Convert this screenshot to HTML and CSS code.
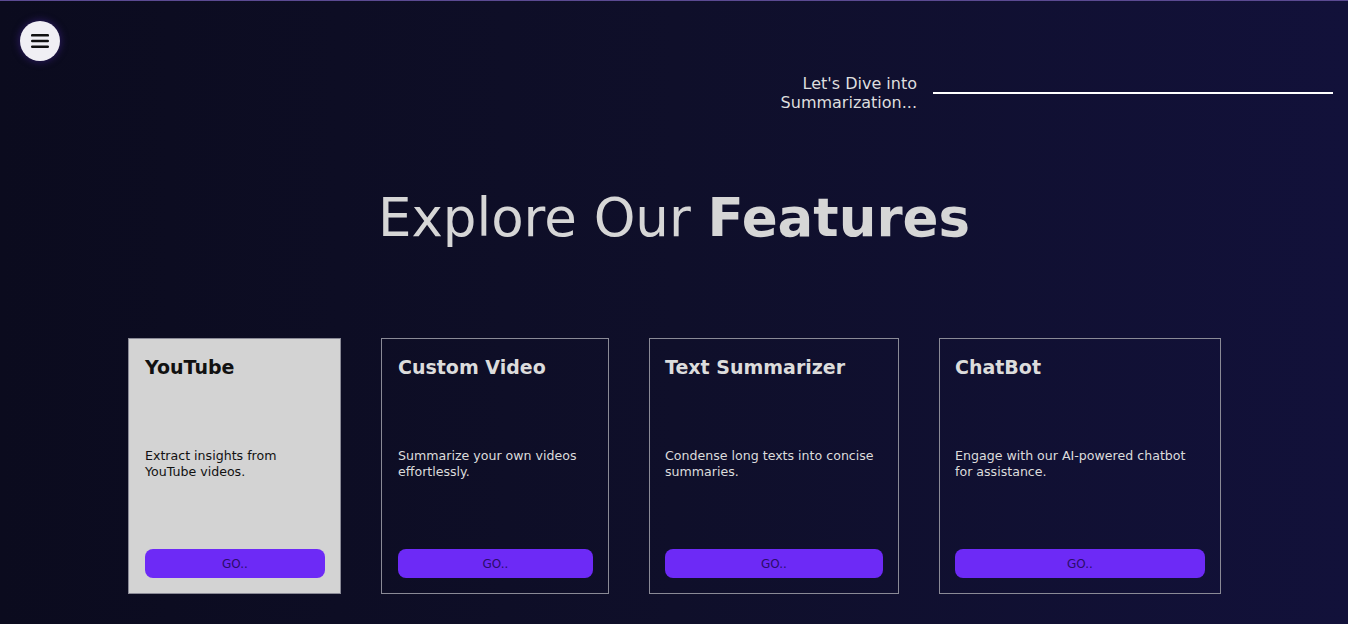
FILE: index.html
```html
<!DOCTYPE html>
<html>
<head>
<meta charset="utf-8">
<link rel="stylesheet" href="styles.css">
</head>
<body>
<div class="page">
  <header class="top">
    <button class="menu" aria-label="menu">
      <svg width="18" height="14" viewBox="0 0 18 14"><rect x="0" y="0" width="18" height="2.6" rx="1.2" fill="#111"/><rect x="0" y="5.7" width="18" height="2.6" rx="1.2" fill="#111"/><rect x="0" y="11.4" width="18" height="2.6" rx="1.2" fill="#111"/></svg>
    </button>
  </header>
  <div class="tagline">
    <p class="tag-text">Let's Dive into<br>Summarization...</p>
    <span class="tag-line"></span>
  </div>
  <h1 class="title">Explore Our <b>Features</b></h1>
  <section class="cards">
    <div class="card card-active card-w1">
      <h2>YouTube</h2>
      <p>Extract insights from YouTube videos.</p>
      <button class="go">GO..</button>
    </div>
    <div class="card card-w2">
      <h2>Custom Video</h2>
      <p>Summarize your own videos effortlessly.</p>
      <button class="go">GO..</button>
    </div>
    <div class="card card-w3">
      <h2>Text Summarizer</h2>
      <p>Condense long texts into concise summaries.</p>
      <button class="go">GO..</button>
    </div>
    <div class="card card-w4">
      <h2>ChatBot</h2>
      <p>Engage with our AI-powered chatbot for assistance.</p>
      <button class="go">GO..</button>
    </div>
  </section>
</div>
</body>
</html>
```
FILE: styles.css
```css
html, body {
  margin: 0;
  padding: 0;
  height: 100%;
}
body {
  background: linear-gradient(90deg, #0b0b1e 0%, #0f0f2a 50%, #12113a 100%);
  border-top: 1px solid #5b4a92;
  box-sizing: border-box;
  font-family: "DejaVu Sans", Verdana, sans-serif;
  color: #dcdcdc;
  overflow: hidden;
}
.page {
  height: 623px;
  display: flex;
  flex-direction: column;
}
.top {
  padding: 20px 0 0 20px;
  height: 40px;
}
.menu {
  width: 40px;
  height: 40px;
  border-radius: 50%;
  border: none;
  background: #f0eff4;
  box-shadow: 0 0 6px 2px rgba(40, 25, 90, 0.8);
  display: flex;
  align-items: center;
  justify-content: center;
  padding: 0;
}
.tagline {
  display: flex;
  justify-content: flex-end;
  align-items: center;
  gap: 16px;
  padding-right: 15px;
  margin-top: 13px;
}
.tag-text {
  margin: 0;
  text-align: right;
  font-family: "DejaVu Sans", sans-serif;
  font-size: 16px;
  line-height: 19px;
  color: #dedede;
}
.tag-line {
  width: 400px;
  height: 2px;
  background: #ffffff;
}
.title {
  margin: 73px 0 0 0;
  text-align: center;
  font-family: "DejaVu Sans", sans-serif;
  font-weight: normal;
  font-size: 53px;
  line-height: 66px;
  color: #d6d6d6;
}
.title b {
  font-weight: bold;
}
.cards {
  display: flex;
  justify-content: center;
  gap: 40px;
  margin-top: 87px;
  padding-left: 1px;
}
.card {
  box-sizing: border-box;
  height: 256px;
  border: 1px solid #8a8a96;
  padding: 15px 15px 15px 15px;
  display: flex;
  flex-direction: column;
}
.card-w1 { width: 213px; padding-left: 16px; }
.card-w2 { width: 228px; padding-left: 16px; }
.card-w3 { width: 250px; }
.card-w4 { width: 282px; }
.card-active {
  background: #d3d3d3;
  color: #111;
}
.card h2 {
  margin: 0;
  font-size: 19px;
  line-height: 24px;
  font-weight: bold;
  padding-top: 1px;
}
.card p {
  margin: 69px 0 0 0;
  font-size: 12.6px;
  line-height: 16px;
  flex: 1;
}
.go {
  height: 29px;
  width: 100%;
  border: none;
  border-radius: 8px;
  background: #6d2af6;
  color: #2a0d6a;
  font-family: "DejaVu Sans", sans-serif;
  font-size: 12px;
  padding: 0;
  margin-top: auto;
}
```
